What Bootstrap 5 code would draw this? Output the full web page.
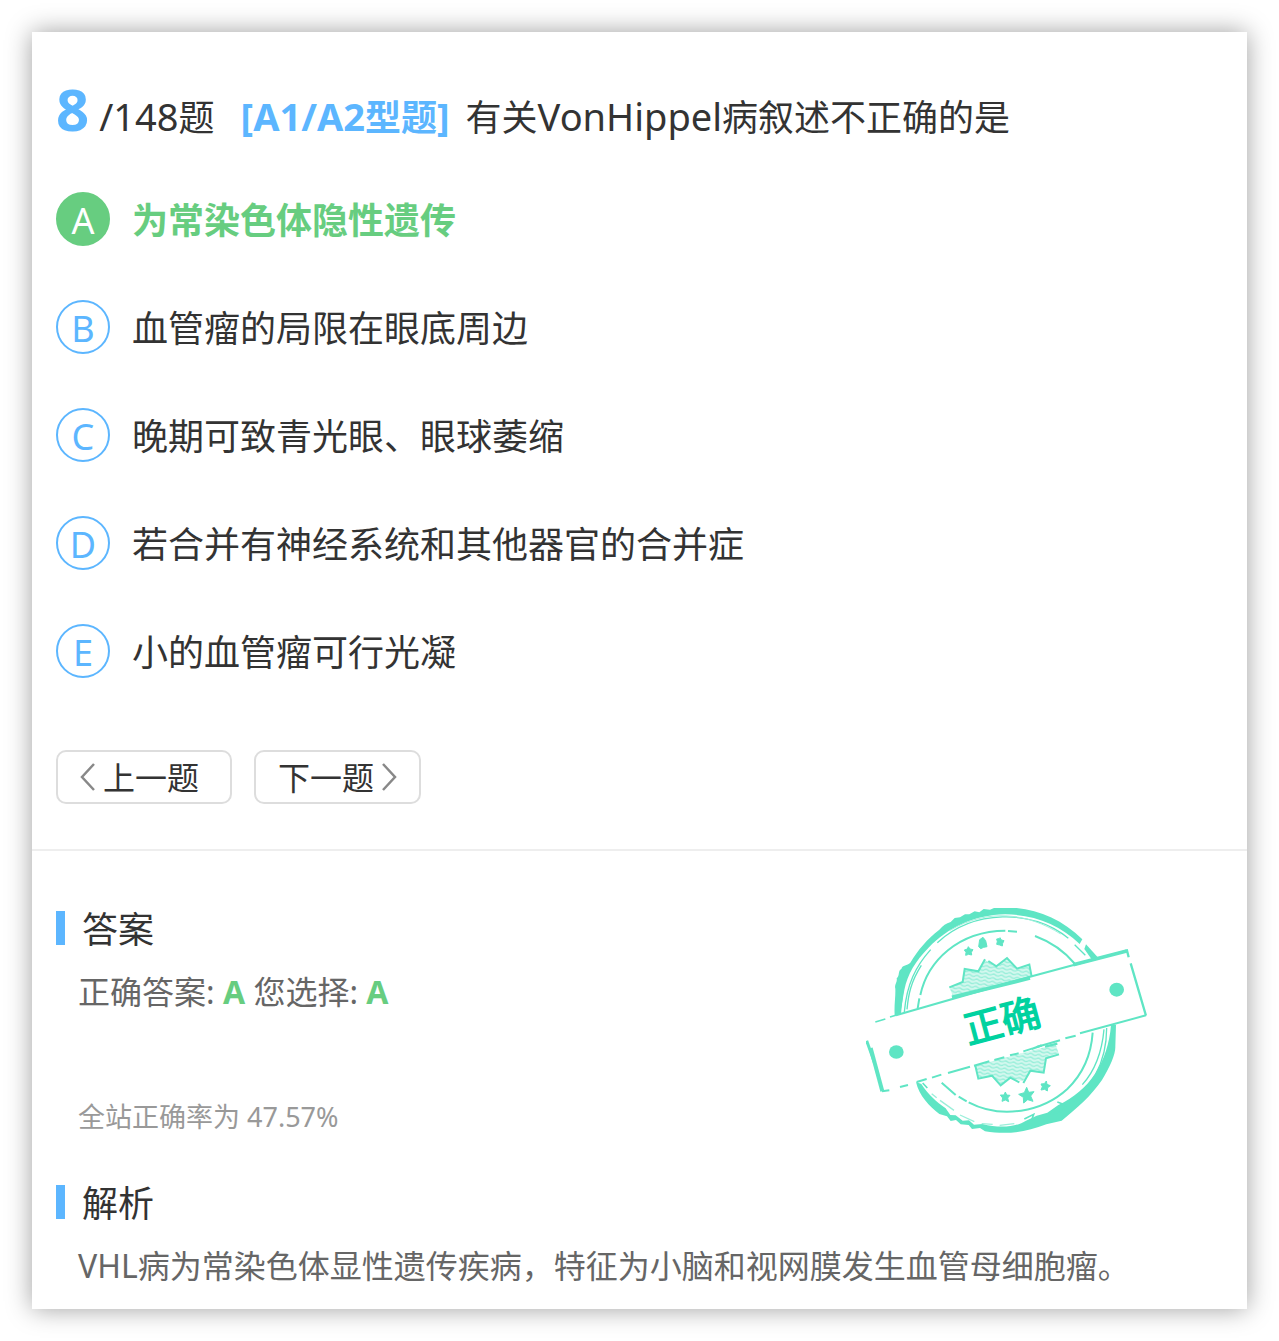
<!DOCTYPE html>
<html lang="zh-CN">
<head>
<meta charset="utf-8">
<meta name="viewport" content="width=device-width, initial-scale=1">
<title>题目练习</title>
<link href="https://cdn.jsdelivr.net/npm/bootstrap@5.3.0/dist/css/bootstrap.min.css" rel="stylesheet">
<style>
  body { font-family: "Noto Sans", "Noto Sans CJK SC", sans-serif; color: #333; background: #fff; font-size: 36px; line-height: 54px; }
  .quiz-card { margin: 32px; border: 0; border-radius: 0; color: #333; box-shadow: 0 0 24px rgba(0, 0, 0, .38); }
  .quiz-question { padding: 41px 24px 45px; border-bottom: 2px solid #eee; }
  .quiz-title { font-size: 36px; line-height: 72px; font-weight: 400; margin: 0 0 38px; }
  .quiz-title .latin { font-size: 38px; }
  .quiz-number { font-size: 58px; font-weight: 700; color: #5cb6ff; margin-right: 10px; }
  .quiz-type { color: #5cb6ff; font-weight: 700; margin: 0 16px 0 26px; }
  .quiz-options { display: grid; gap: 54px; margin-bottom: 72px; }
  .quiz-option { cursor: pointer; gap: 22px; }
  .quiz-option > span:last-child { padding-top: 4px; line-height: 50px; }
  .quiz-letter { flex: none; width: 54px; height: 54px; border: 2px solid #5cb6ff; border-radius: 50%; color: #5cb6ff; text-align: center; line-height: 54px; }
  .btn-check:checked + .quiz-option { color: #67cd80; font-weight: 700; }
  .btn-check:checked + .quiz-option .quiz-letter { background: #67cd80; border-color: #67cd80; color: #fff; font-weight: 400; }
  .quiz-pager { gap: 22px; }
  .quiz-nav { --bs-btn-color: #333; --bs-btn-border-color: #ddd; --bs-btn-hover-border-color: #bbb; border-width: 2px; border-radius: 10px; font-size: 32px; line-height: 48px; padding: 2px 22px 0; }
  .quiz-nav-prev { padding-right: 31px; }
  .quiz-nav svg { width: 15px; height: 28px; margin-bottom: 2px; }
  .quiz-answer { padding: 52px 24px 16px; }
  .quiz-heading { font-size: 36px; line-height: 54px; font-weight: 400; margin: 0 0 8px; gap: 17px; }
  .quiz-heading::before { content: ""; width: 9px; height: 34px; margin-bottom: 4px; background: #5cb6ff; }
  .quiz-text { font-size: 32px; line-height: 54px; color: #666; margin: 0 0 0 22px; }
  .quiz-text strong { color: #67cd80; }
  .quiz-rate { font-size: 27px; line-height: 40px; color: #999; margin: 78px 0 40px 22px; }
  .quiz-stamp { width: 281px; height: 225px; margin: 5px 76px 0 0; }
</style>
<script src="https://cdn.jsdelivr.net/npm/bootstrap@5.3.0/dist/js/bootstrap.bundle.min.js"></script>
</head>
<body>
<main class="card quiz-card">
  <section class="quiz-question">
    <h1 class="quiz-title"><span class="quiz-number">8</span><span class="latin">/148</span>题<span class="quiz-type"><span class="latin">[A1/A2</span>型题<span class="latin">]</span></span>有关<span class="latin">VonHippel</span>病叙述不正确的是</h1>

    <div class="quiz-options">
      <div><input class="btn-check" type="radio" name="answer" id="optA" checked><label class="quiz-option d-flex align-items-center" for="optA"><span class="quiz-letter">A</span><span>为常染色体隐性遗传</span></label></div>
      <div><input class="btn-check" type="radio" name="answer" id="optB"><label class="quiz-option d-flex align-items-center" for="optB"><span class="quiz-letter">B</span><span>血管瘤的局限在眼底周边</span></label></div>
      <div><input class="btn-check" type="radio" name="answer" id="optC"><label class="quiz-option d-flex align-items-center" for="optC"><span class="quiz-letter">C</span><span>晚期可致青光眼、眼球萎缩</span></label></div>
      <div><input class="btn-check" type="radio" name="answer" id="optD"><label class="quiz-option d-flex align-items-center" for="optD"><span class="quiz-letter">D</span><span>若合并有神经系统和其他器官的合并症</span></label></div>
      <div><input class="btn-check" type="radio" name="answer" id="optE"><label class="quiz-option d-flex align-items-center" for="optE"><span class="quiz-letter">E</span><span>小的血管瘤可行光凝</span></label></div>
    </div>

    <div class="quiz-pager d-flex flex-wrap">
      <button type="button" class="btn quiz-nav quiz-nav-prev d-flex align-items-center"><svg class="me-2" viewBox="0 0 15 28" fill="none" stroke="#888" stroke-width="2.5" aria-hidden="true"><path d="M14 1 2 14l12 13"/></svg>上一题</button>
      <button type="button" class="btn quiz-nav d-flex align-items-center">下一题<svg class="ms-2" viewBox="0 0 15 28" fill="none" stroke="#888" stroke-width="2.5" aria-hidden="true"><path d="m1 1 12 13L1 27"/></svg></button>
    </div>
  </section>

  <section class="quiz-answer">
    <div class="d-flex flex-wrap justify-content-between align-items-start">
      <div>
        <h2 class="quiz-heading d-flex align-items-center">答案</h2>
        <p class="quiz-text">正确答案: <strong>A</strong> 您选择: <strong>A</strong></p>
        <p class="quiz-rate">全站正确率为 47.57%</p>
      </div>
      <svg class="quiz-stamp" viewBox="48 54 843 675" role="img" aria-label="正确" fill="none" stroke="#5fe5c4" stroke-width="6">
        <defs>
          <pattern id="waves" width="24" height="11" patternUnits="userSpaceOnUse" patternTransform="rotate(8)"><rect width="24" height="11" fill="#d5f8ef" stroke="none"/><path d="M0 5q6-4 12 0t12 0" stroke="#96eed9" stroke-width="4"/></pattern>
        </defs>
        <!-- upper rim -->
        <path d="M134 376C132 345 137 322 136 296C132 283 143 277 140 265C150 257 143 242 154 237C158 223 171 228 181 218C204 180 232 146 268 119C279 107 288 100 302 96L314 84 330 82 345 73 358 73 374 64 388 67 401 57 420 59 432 54H500C570 61 642 92 697 148L689 162C629 103 552 74 466 73C370 75 292 115 237 172C196 214 173 252 163 300L150 374Z" fill="#5fe5c4" stroke="none"/>
        <path d="M708 163 746 205 728 212 703 177Z" fill="#5fe5c4" stroke="none"/>
        <path d="M262 158C369 59 546 55 655 145M674 164l32 32" stroke-width="4"/>
        <path d="M300 121C414 54 532 69 632 132" stroke-width="3" stroke="#a3f0dd"/>
        <path d="M242 179C198 228 170 282 163 366M158 305l-7 66M214 226C182 276 175 315 171 358" stroke-width="4"/>
        <path d="M203 355l5-30M211 315C233 213 325 123 466 122M474 123l27 2M555 138Q628 165 675 222" stroke-width="6"/>
        <!-- lower rim -->
        <path d="M198 576 214 582C234 613 259 635 287 655L301 675 317 676 338 692 357 691 372 704 398 702C447 715 496 712 528 692L560 677 592 668 625 645C717 603 774 517 783 405L798 404 796 469C797 493 780 530 756 570C723 618 681 655 635 692L589 703C525 728 470 734 405 724L390 714 366 717 356 705 332 703 318 690 302 693 291 679 268 672C239 650 207 617 198 576Z" fill="#5fe5c4" stroke="none"/>
        <path d="M622 636l27 10-10 17-38 9M523 687l28-14-6 17M218 579l14 15" stroke-width="5"/>
        <path d="M770 414C770 517 723 605 645 649M762 418C755 496 732 545 697 584" stroke-width="4"/>
        <path d="M245 611l15 12M270 631l42 30M330 675l43 20M395 701l33 2M449 706l44-5" stroke-width="4" stroke="#9befda"/>
        <path d="M275 578l42 37M326 620l24 14M356 637C455 689 578 665 652 597C706 545 724 487 728 428" stroke-width="6"/>
        <!-- rosettes -->
        <path d="M298 292 338 276 344 237 385 244 405 210 438 229 471 204 501 236 538 224 545 260 310 322Z" fill="url(#waves)" stroke="none"/>
        <path d="M298 292 338 276 344 237 385 244 405 208M415 213l24 16 32-25 30 32 37-12 7 36"/>
        <path d="M376 527 385 566 426 557 452 586 481 563 518 574 541 542 581 547 588 505 627 493 617 463Z" fill="url(#waves)" stroke="none"/>
        <path d="M376 527l9 39 41-9 26 29 29-23 27 14M520 579l21-37 40 6 7-43 39-12"/>
        <path d="M545 477l30-11M585 470l37-9" stroke-width="7"/>
        <!-- ribbon -->
        <path d="M76 396l30-9M120 381l20-6" stroke-width="5"/>
        <path d="M138 376 540 260 830 182" stroke-width="6"/>
        <path d="M306 322 420 294 540 264M670 224 830 183" stroke-width="11"/>
        <path d="M830 178l6 24M842 220 888 377" stroke-width="7"/>
        <path d="M888 376 690 430M677 437l-31 8M630 451l-70 20M546 476l-26 8M506 490l-26 6M463 502l-30 8M418 514l-46 13M360 530l-66 19M274 554l-28 9M230 567l-30 9M174 585l-24 6M118 601l-22 3" stroke-width="6"/>
        <path d="M50 452 74 520" stroke-width="9"/><path d="M62 474 97 604" stroke-width="12"/>
        <ellipse cx="139" cy="486" rx="22" ry="20" fill="#5fe5c4" stroke="none"/>
        <ellipse cx="800" cy="299" rx="22" ry="21" fill="#5fe5c4" stroke="none"/>
        <!-- small stars -->
        <g fill="#5fe5c4" stroke="#5fe5c4" stroke-width="3" stroke-linejoin="round">
          <path d="m355 170 5 7 9 2-5 8 1 8-9-2-9 3 1-9-5-7 9-3ZM399 142l8 10 4 18-10 2-9 4-6-6 3-21ZM450 143l4 7 8 2-4 8-1 8-8-3-9-2 2-8-2-8 7-1Z"/>
          <path d="m530 592 6 15 16-2-10 13 7 16-16-5-12 10-1-17-14-9 17-5Z"/>
          <path d="m466 606 4 9 10 1-7 8 3 11-10-5-10 4 2-10-7-9 11 0ZM589 573l2 10 10 4-8 6-1 10-8-5-11 2 4-10-4-8 10-1Z"/>
        </g>
        <text transform="translate(456 394) rotate(-15)" text-anchor="middle" y="41" font-family="Noto Sans CJK SC, sans-serif" font-size="116" font-weight="400" fill="#00d2a0" stroke="#00d2a0" stroke-width="4">正确</text>
      </svg>
    </div>
    <h2 class="quiz-heading d-flex align-items-center">解析</h2>
    <p class="quiz-text">VHL病为常染色体显性遗传疾病，特征为小脑和视网膜发生血管母细胞瘤。</p>
  </section>
</main>
</body>
</html>
